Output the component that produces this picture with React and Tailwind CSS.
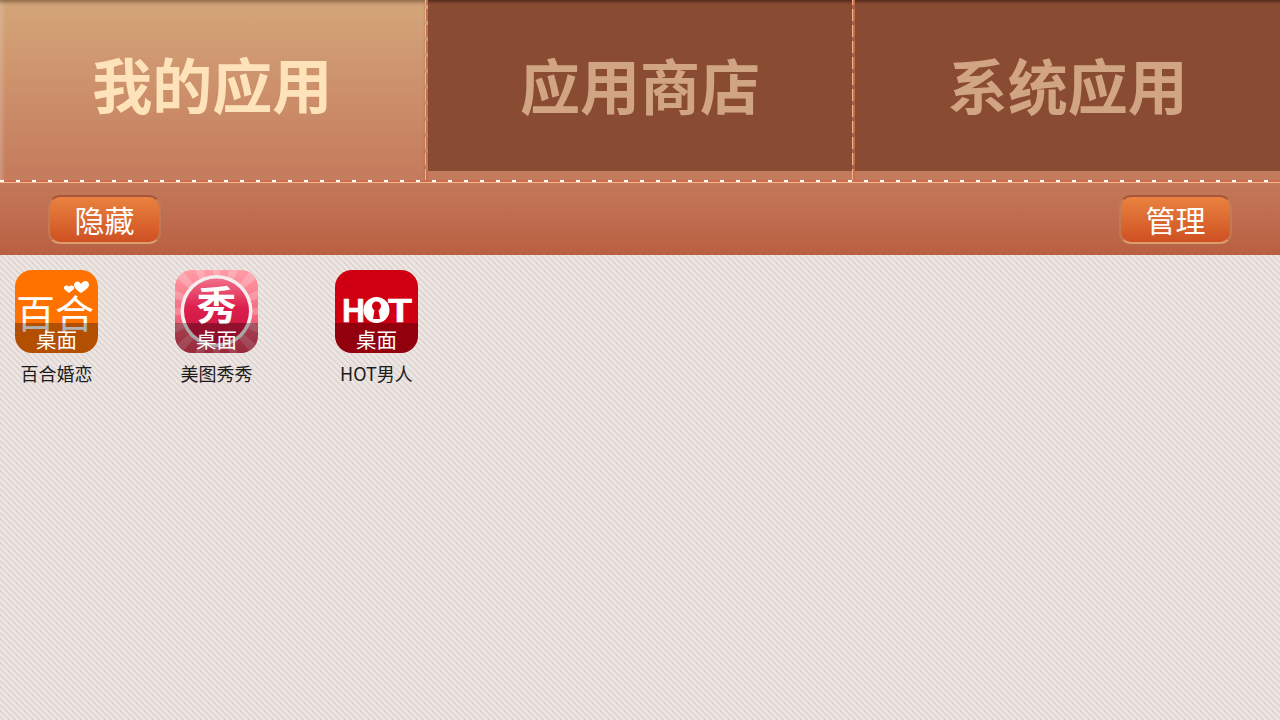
const FONT = "font-['Noto_Sans_CJK_SC','Noto_Sans',sans-serif]";

function LilyIcon() {
  return (
    <svg viewBox="0 0 83 83" className="absolute inset-0 h-full w-full">
      <rect width="83" height="83" fill="#ff7200" />
      <path d="M66 23c-4-3-7-5-7-8 0-4 5-5 7-1 2-4 8-4 8 1 0 3-4 5-8 8z" fill="#fff" />
      <path d="M54 23c-2-2-5-3-5-5 0-3 4-3 5-1 1-2 5-2 5 1 0 2-3 3-5 5z" fill="#fff" />
      <text x="1" y="58" fontSize="39" fontWeight="400" fill="#fff" className="font-['Noto_Sans_CJK_SC',sans-serif]">百合</text>
    </svg>
  );
}

function MeituIcon() {
  const rays = [];
  for (let i = 0; i < 16; i++) {
    rays.push(
      <path key={i} d="M41.5 41.5L36 -20L47 -20z" fill="#ffffff" fillOpacity="0.2" transform={`rotate(${i * 22.5} 41.5 41.5)`} />
    );
  }
  return (
    <svg viewBox="0 0 83 83" className="absolute inset-0 h-full w-full">
      <defs>
        <linearGradient id="bgRed" x1="0" y1="0" x2="0" y2="1">
          <stop offset="0" stopColor="#ff9ca6" />
          <stop offset="0.6" stopColor="#f2637a" />
          <stop offset="1" stopColor="#dc3a55" />
        </linearGradient>
        <linearGradient id="ball" x1="0" y1="0" x2="0" y2="1">
          <stop offset="0" stopColor="#f0708a" />
          <stop offset="0.45" stopColor="#dc1f4c" />
          <stop offset="1" stopColor="#c8123c" />
        </linearGradient>
      </defs>
      <rect width="83" height="83" fill="url(#bgRed)" />
      {rays}
      <circle cx="41.5" cy="41" r="36" fill="#f4eeee" />
      <circle cx="41.5" cy="41" r="32.5" fill="url(#ball)" />
      <text x="41.5" y="50" textAnchor="middle" fontSize="40" fontWeight="700" fill="#fff" className="font-['Noto_Sans_CJK_SC',sans-serif]">秀</text>
    </svg>
  );
}

function HotIcon() {
  return (
    <svg viewBox="0 0 83 83" className="absolute inset-0 h-full w-full">
      <rect width="83" height="83" fill="#d00012" />
      <text x="7" y="52" fontSize="33" fontWeight="700" fill="#fff" stroke="#fff" strokeWidth="0.6" textLength="23" lengthAdjust="spacingAndGlyphs" className="font-['Liberation_Sans',sans-serif]">H</text>
      <circle cx="41.5" cy="40" r="13" fill="#fff" />
      <circle cx="41.5" cy="36" r="4.5" fill="#d00012" />
      <path d="M40 37h3l2 12h-7z" fill="#d00012" />
      <text x="53" y="52" fontSize="33" fontWeight="700" fill="#fff" stroke="#fff" strokeWidth="0.6" textLength="24" lengthAdjust="spacingAndGlyphs" className="font-['Liberation_Sans',sans-serif]">T</text>
    </svg>
  );
}

function AppItem({ name, icon }) {
  return (
    <div className="flex flex-col items-center">
      <div className="relative h-[83px] w-[83px] overflow-hidden rounded-[17px]">
        {icon}
        <div className={`absolute inset-x-0 bottom-0 h-[30px] bg-black/30 text-center text-[20.5px] leading-[33px] text-white ${FONT}`}>
          桌面
        </div>
      </div>
      <div className={`mt-[8px] text-[18px] leading-[24px] text-[#1c1c1c] ${FONT}`}>{name}</div>
    </div>
  );
}

function Tab({ label, active }) {
  if (active) {
    return (
      <div className="flex h-[180px] flex-1 items-center justify-center bg-gradient-to-b from-[#d4a67a] to-[#c47a5c] pb-[14px] shadow-[inset_0_4px_4px_-2px_rgba(70,40,20,0.55),inset_4px_0_5px_-3px_rgba(255,230,210,0.6)]">
        <span className="text-[60px] font-bold leading-none text-[#fee2ba]">{label}</span>
      </div>
    );
  }
  return (
    <div className="h-[180px] flex-1">
      <div className="flex h-[171px] items-center justify-center bg-[#8a4b33] pb-[3px] shadow-[inset_0_4px_3px_-2px_rgba(50,20,10,0.6)]">
        <span className="text-[60px] font-bold leading-none text-[#d1a584]">{label}</span>
      </div>
    </div>
  );
}

function Divider({ first }) {
  return (
    <div className={first ? "flex h-[180px] w-[3px] shrink-0 bg-gradient-to-b from-[#d4a67a] to-[#c47a5c]" : "flex h-[180px] w-[3px] shrink-0 bg-[#a8604a]"}>
      <div className="h-full w-px bg-[repeating-linear-gradient(180deg,#f6b48c_0_5px,transparent_5px_9px,#f6b48c_9px_16px)]" />
      <div className="h-full w-[2px] bg-[repeating-linear-gradient(180deg,#c4704f_0_5px,transparent_5px_9px,#c4704f_9px_16px)]" />
    </div>
  );
}

function ActionButton({ label }) {
  return (
    <button className="flex h-[49px] w-[113px] items-center justify-center rounded-[12px] border-2 border-[#dc9c6c] border-t-[#a9553a] border-l-[#c07a55] border-r-[#c07a55] bg-gradient-to-b from-[#e9823f] to-[#cf5022] pb-[2px] text-[30px] leading-none text-white">
      {label}
    </button>
  );
}

export default function App() {
  return (
    <div className={`flex h-[720px] w-[1280px] flex-col overflow-hidden ${FONT}`}>
      <div className="flex h-[180px] bg-[#c47a5c]">
        <Tab label="我的应用" active />
        <Divider first />
        <Tab label="应用商店" />
        <Divider />
        <Tab label="系统应用" />
      </div>

      {/* 缝线 */}
      <div className="relative h-[3px] bg-[#c96f50]">
        <div className="h-[2px] bg-[repeating-linear-gradient(90deg,#ffffff_0_4px,transparent_4px_16px)]" />
        <div className="h-px bg-[#f6b48c]" />
      </div>

      <div className="flex h-[72px] items-center justify-between bg-gradient-to-b from-[#c4795a] to-[#b95f42] px-[48px] pt-[1px]">
        <ActionButton label="隐藏" />
        <ActionButton label="管理" />
      </div>

      <div className="flex-1 bg-[linear-gradient(45deg,#ddd3d0_15%,#ece5e2_15%,#ece5e2_50%,#ddd3d0_50%,#ddd3d0_65%,#ece5e2_65%)] bg-[length:6px_6px]">
        <div className="grid grid-cols-[repeat(8,113px)] gap-x-[47px] pt-[15px]">
          <AppItem name="百合婚恋" icon={<LilyIcon />} />
          <AppItem name="美图秀秀" icon={<MeituIcon />} />
          <AppItem name="HOT男人" icon={<HotIcon />} />
        </div>
      </div>
    </div>
  );
}
